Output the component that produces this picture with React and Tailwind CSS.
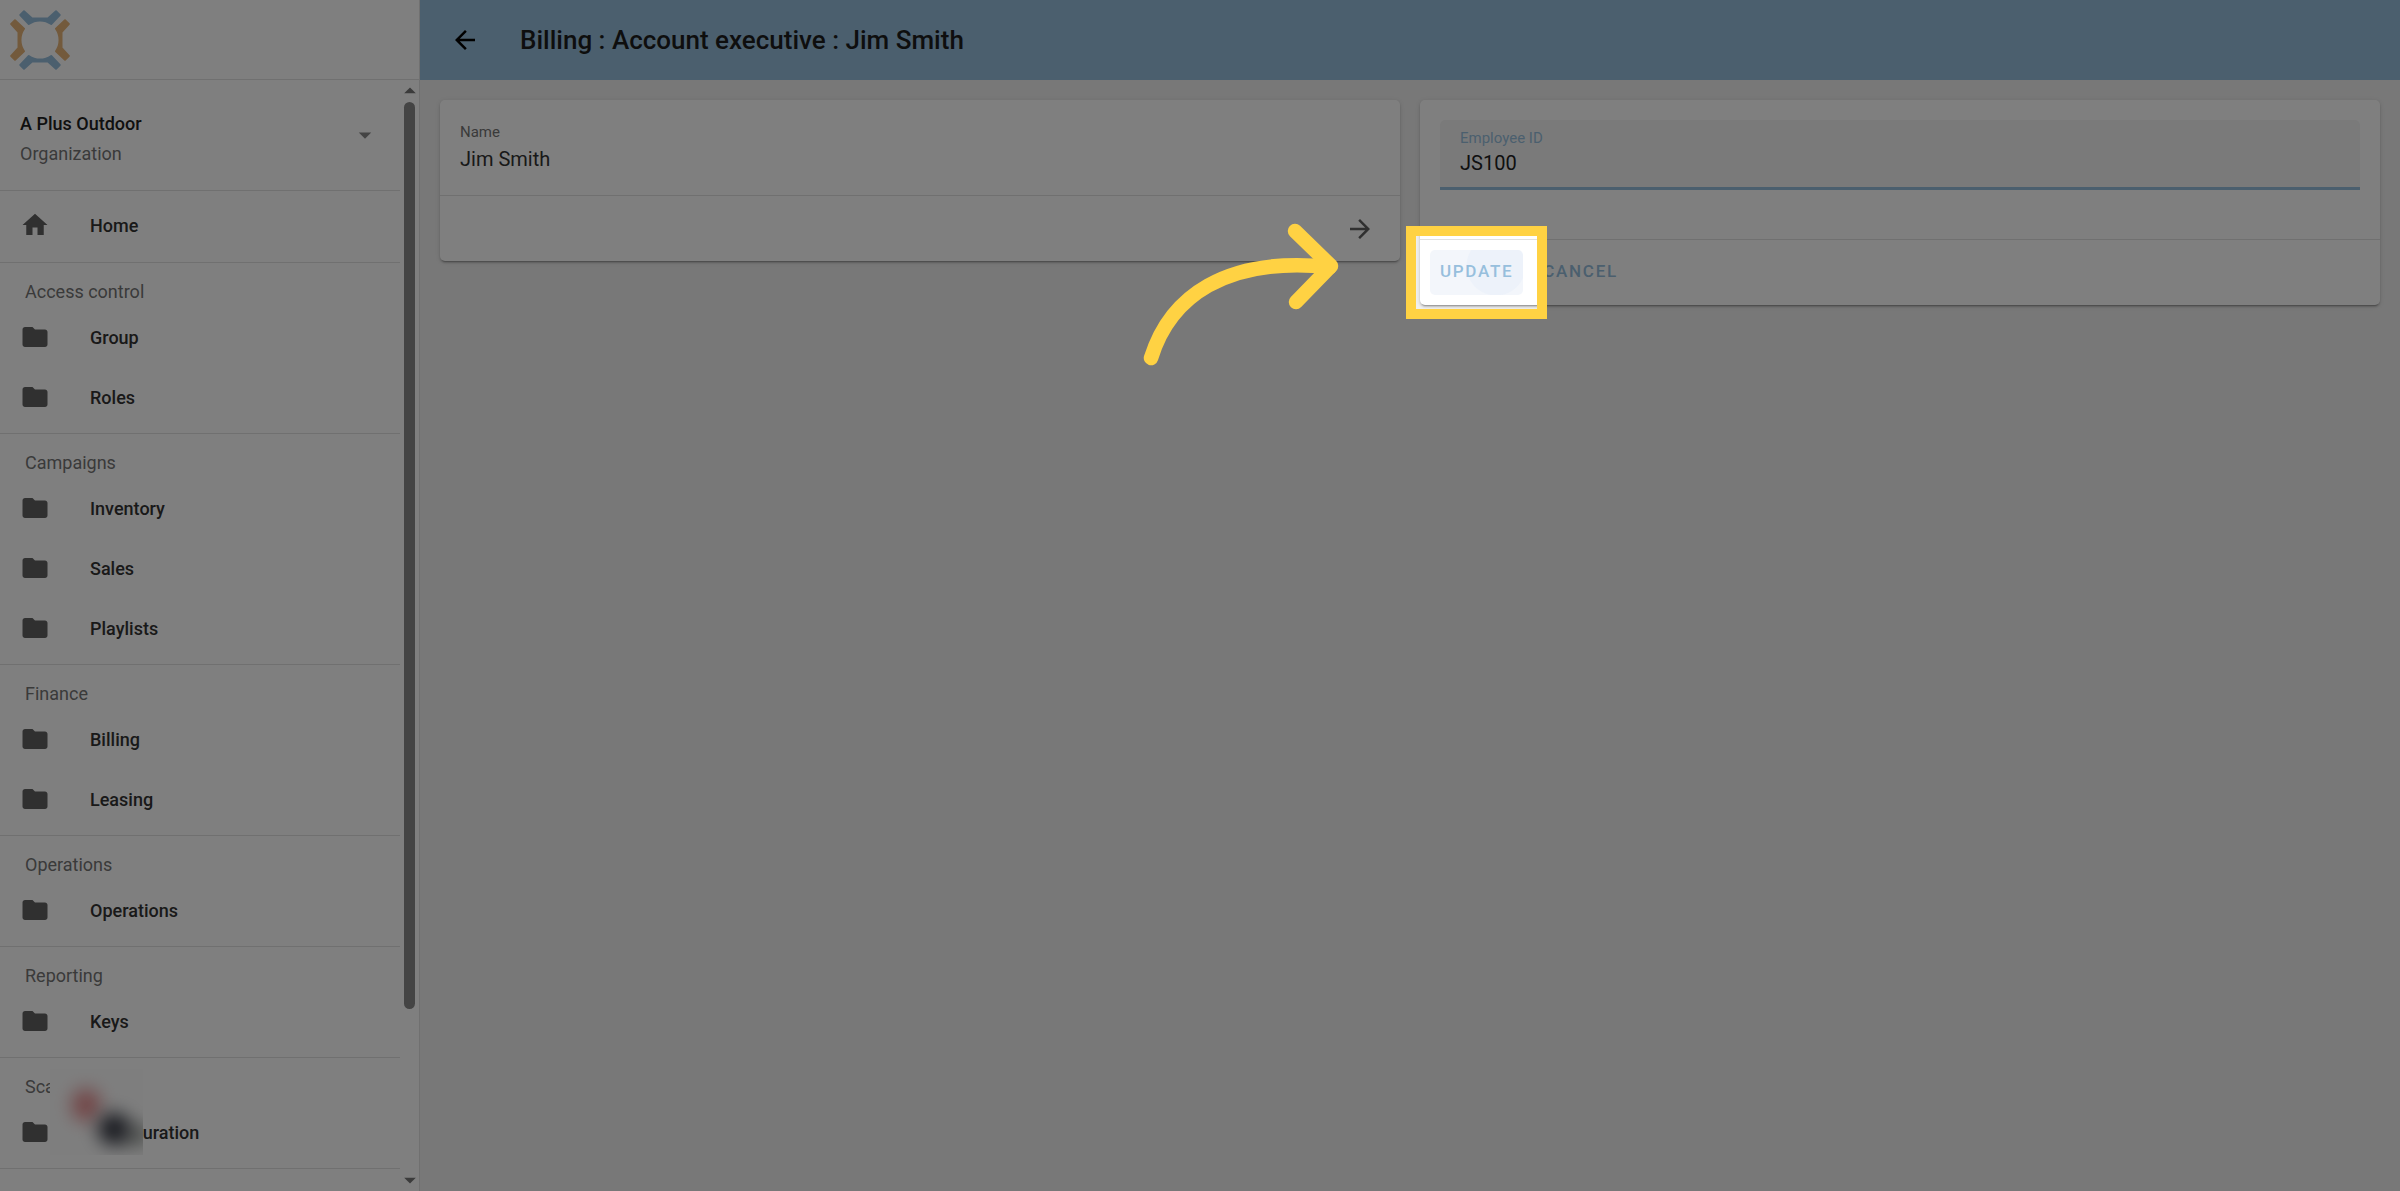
import React from 'react';
import { MdArrowBack, MdArrowDropDown, MdArrowDropUp, MdArrowForward, MdFolder, MdHome } from 'react-icons/md';

const sections = [
    { title: 'Access control', items: ['Group', 'Roles'] },
    { title: 'Campaigns', items: ['Inventory', 'Sales', 'Playlists'] },
    { title: 'Finance', items: ['Billing', 'Leasing'] },
    { title: 'Operations', items: ['Operations'] },
    { title: 'Reporting', items: ['Keys'] },
    { title: 'Sca', items: ['Configuration'] },
];

function Logo() {
    return (
        <svg width="60" height="60" viewBox="0 0 60 60" strokeLinejoin="round" strokeWidth="2" aria-label="Logo">
            {[0, 90, 180, 270].map((angle) => {
                const color = angle % 180 === 0 ? '#97bfdd' : '#e6b479';
                return (
                    <path
                        key={angle}
                        transform={`rotate(${angle} 30 30)`}
                        fill={color}
                        stroke={color}
                        d="M14 1.200 L22 8.500 H38 L46 1.200 L49.700 5 L41.200 14 A19.500 19.500 0 0 0 18.800 14 L10.300 5 Z"
                    />
                );
            })}
        </svg>
    );
}

function NavItem({ icon, label }) {
    return (
        <a href="#" className="flex h-[60px] items-center gap-10 pl-5 text-[18px] font-medium text-[#333]">
            <span className="text-[30px] text-[#616161]">{icon}</span>
            {label}
        </a>
    );
}

function Sidebar() {
    return (
        <aside className="flex h-screen w-[420px] shrink-0 flex-col border-r border-[#e0e0e0] bg-white">
            <div className="flex h-20 shrink-0 items-center border-b border-[#e0e0e0] pl-[10px]">
                <Logo />
            </div>
            <div className="flex min-h-0 flex-1">
                <nav className="w-[400px] shrink-0 overflow-hidden">
                    <button type="button" className="flex h-[111px] w-full items-center justify-between border-b border-[#e0e0e0] pr-5 pl-5 text-left text-[18px]">
                        <span className="pt-2 leading-[30px]">
                            <span className="block font-medium text-[#212121]">A Plus Outdoor</span>
                            <span className="block text-[#757575]">Organization</span>
                        </span>
                        <MdArrowDropDown size={30} className="text-[#888]" />
                    </button>
                    <div className="border-b border-[#e0e0e0] pt-1 pb-[7px]">
                        <NavItem icon={<MdHome />} label="Home" />
                    </div>
                    {sections.map((section) => (
                        <section key={section.title} className="relative border-b border-[#e0e0e0] pb-[6px]">
                            <h6 className="h-11 pt-[17px] pl-[25px] text-[18px] leading-6 text-[#757575]">{section.title}</h6>
                            {section.items.map((item) => (
                                <NavItem key={item} icon={<MdFolder />} label={item} />
                            ))}
                            {section.title === 'Sca' && <HiddenBadge />}
                        </section>
                    ))}
                </nav>
                <div className="flex min-w-0 flex-1 flex-col items-center text-[#777]">
                    <div className="flex h-[22px] items-center">
                        <MdArrowDropUp size={28} />
                    </div>
                    <div className="w-[11px] flex-1">
                        <div className="h-[85%] rounded-full bg-[#888]" />
                    </div>
                    <div className="flex h-[22px] items-center">
                        <MdArrowDropDown size={28} />
                    </div>
                </div>
            </div>
        </aside>
    );
}

// blurred-out widget that floats over the last nav section
function HiddenBadge() {
    return (
        <div className="absolute top-[11px] left-[50px] h-[86px] w-[93px] overflow-hidden bg-[#fdfdfd]">
            <div className="absolute top-[20px] left-[22px] h-8 w-7 rounded-full bg-[#e58a8c] blur-[9px]" />
            <div className="absolute top-[54px] left-[70px] h-6 w-8 rounded-full bg-[#b4b8b4] blur-[8px]" />
            <div className="absolute top-[44px] left-[48px] h-8 w-8 rounded-full bg-[#31343f] blur-[9px]" />
        </div>
    );
}

function Card({ children }) {
    return (
        <div className="flex-1 rounded-[5px] bg-white shadow-[0_3px_1px_-2px_rgba(0,0,0,0.2),0_2px_2px_rgba(0,0,0,0.14),0_1px_5px_rgba(0,0,0,0.12)]">
            {children}
        </div>
    );
}

// dims the page around the update button and points at it
function Spotlight() {
    return (
        <>
            <div className="pointer-events-none absolute -inset-6 z-10 border-10 border-[#ffd243] shadow-[0_0_0_3000px_rgba(0,0,0,0.5)]" />
            <svg
                className="pointer-events-none absolute -top-[30px] -left-[290px] z-20"
                width="205"
                height="150"
                viewBox="0 0 205 150"
                fill="none"
                stroke="#ffd243"
                strokeWidth="14.500"
                strokeLinecap="round"
                strokeLinejoin="round"
            >
                <path d="M11 138 C30 77 85 36 190 47" />
                <path d="M155 11 L191 46 L156 82" />
            </svg>
        </>
    );
}

function App() {
    return (
        <div className="flex min-h-screen overflow-hidden bg-[#f0f0f0] font-[Roboto,sans-serif]">
            <Sidebar />
            <main className="flex-1">
                <header className="flex h-20 items-center gap-10 bg-[#97bfdd] pl-[30px] text-black">
                    <button type="button" aria-label="Back">
                        <MdArrowBack size={30} />
                    </button>
                    <h1 className="text-[26px] font-medium text-[#1c1c1c]">Billing : Account executive : Jim Smith</h1>
                </header>
                <div className="flex items-start gap-5 p-5">
                    <Card>
                        <div className="border-b border-[#e0e0e0] px-5 pt-5 pb-5">
                            <div className="pt-[2px] text-[15px] leading-5 text-[#757575]">Name</div>
                            <div className="pt-[1px] text-[20px] leading-8 text-[#333]">Jim Smith</div>
                        </div>
                        <div className="flex h-[65px] items-center justify-end pr-[25px]">
                            <button type="button" aria-label="Open" className="text-[#616161]">
                                <MdArrowForward size={30} />
                            </button>
                        </div>
                    </Card>
                    <Card>
                        <div className="border-b border-[#e0e0e0] px-5 pt-5 pb-[49px]">
                            <div className="h-[70px] rounded-t-[5px] border-b-3 border-[#97bfdd] bg-[#f5f5f5] px-5 pt-2">
                                <label htmlFor="employee-id" className="block text-[15px] leading-5 text-[#97bfdd]">Employee ID</label>
                                <input
                                    id="employee-id"
                                    type="text"
                                    defaultValue="JS100"
                                    className="block h-[30px] w-full text-[20px] text-[#212121] outline-none"
                                />
                            </div>
                        </div>
                        <div className="flex h-[65px] items-center gap-[10px] px-[10px] text-[17px] font-medium text-[#97bfdd]">
                            <div className="relative">
                                <button
                                    type="button"
                                    className="block h-[45px] rounded-[5px] bg-[radial-gradient(circle_at_66px_16px,#edf2fa_29px,#f3f6fb_30px)] px-[10px] pb-[2px] tracking-widest"
                                >
                                    UPDATE
                                </button>
                                <Spotlight />
                            </div>
                            <button type="button" className="h-[45px] px-[10px] pb-[2px] tracking-widest">CANCEL</button>
                        </div>
                    </Card>
                </div>
            </main>
        </div>
    );
}

export default App;
